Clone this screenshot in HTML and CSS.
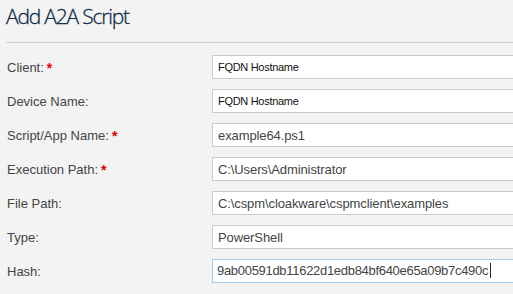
FILE: index.html
```html
<!DOCTYPE html>
<html lang="en">
<head>
    <meta charset="UTF-8">
    <title>Add A2A Script</title>
    <link rel="stylesheet" href="styles.css">
</head>
<body>
    <h1 class="title">Add A2A Script</h1>
    <hr class="divider">

    <div class="form">
        <label class="label">Client:<span class="req">*</span></label>
        <div class="field"><input class="input small" type="text" value="FQDN Hostname"></div>

        <label class="label">Device Name:</label>
        <div class="field"><input class="input small" type="text" value="FQDN Hostname"></div>

        <label class="label">Script/App Name:<span class="req">*</span></label>
        <div class="field"><input class="input" type="text" value="example64.ps1"></div>

        <label class="label">Execution Path:<span class="req">*</span></label>
        <div class="field"><input class="input" type="text" value="C:\Users\Administrator"></div>

        <label class="label">File Path:</label>
        <div class="field"><input class="input" type="text" value="C:\cspm\cloakware\cspmclient\examples"></div>

        <label class="label">Type:</label>
        <div class="field"><input class="input" type="text" value="PowerShell"></div>

        <label class="label">Hash:</label>
        <div class="field">
            <div class="input focused">9ab00591db11622d1edb84bf640e65a09b7c490c<span class="caret"></span></div>
        </div>
    </div>
</body>
</html>
```

FILE: styles.css
```css
body {
    margin: 0;
    padding: 0 0 0 6px;
    background: #f3f3f3;
    font-family: "Liberation Sans", Arial, sans-serif;
    overflow: hidden;
}
.title {
    margin: 0;
    padding-top: 1px;
    height: 41px;
    font-family: "Open Sans", sans-serif;
    font-weight: 300;
    font-size: 21px;
    letter-spacing: -1.2px;
    line-height: 30px;
    color: #112c48;
    -webkit-text-stroke: 0.3px #112c48;
}
.divider {
    margin: 0;
    border: none;
    border-top: 1px solid #cfcfcf;
}
.form {
    display: grid;
    grid-template-columns: 206px 1fr;
    row-gap: 10px;
    padding-top: 12px;
}
.label {
    display: flex;
    align-items: center;
    padding-left: 1px;
    font-size: 13px;
    color: #444;
}
.req {
    color: #e00000;
    font-weight: bold;
    font-size: 14px;
    margin-left: 3px;
    align-self: flex-start;
    margin-top: 5px;
}
.field {
    overflow: hidden;
}
.input {
    box-sizing: border-box;
    display: block;
    width: 340px;
    height: 24px;
    margin: 0;
    padding: 0 5px;
    border: 1px solid #cbcbcb;
    background: #fff;
    font-family: "Liberation Sans", Arial, sans-serif;
    font-size: 13px;
    letter-spacing: -0.1px;
    line-height: 22px;
    color: #444;
    outline: none;
}
.input.small {
    font-size: 11px;
    letter-spacing: -0.3px;
    color: #111;
}
.input.focused {
    border-color: #9fcdea;
    padding-left: 4px;
    letter-spacing: -0.3px;
    white-space: nowrap;
}
.caret {
    display: inline-block;
    width: 1px;
    height: 15px;
    margin-left: 2px;
    vertical-align: -3px;
    background: #222;
}
```
